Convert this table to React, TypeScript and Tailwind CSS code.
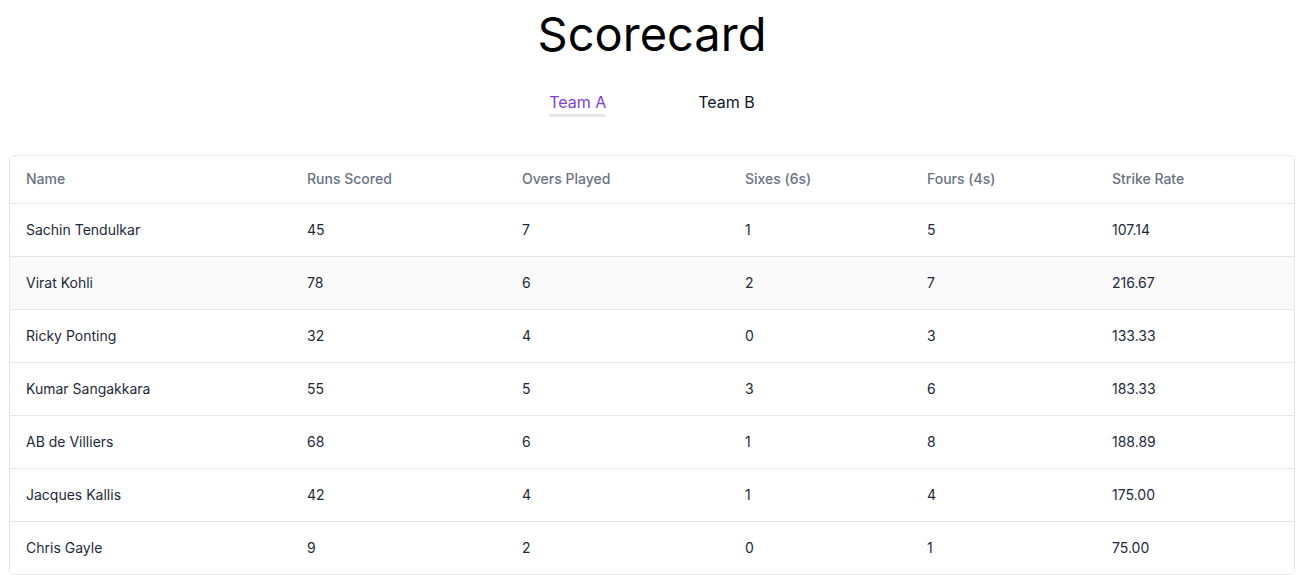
import React, { useState } from "react";

interface Player {
	name: string;
	runs: number;
	overs: number;
	sixes: number;
	fours: number;
	strikeRate: string;
}

const TEAM_A: Player[] = [
	{ name: "Sachin Tendulkar", runs: 45, overs: 7, sixes: 1, fours: 5, strikeRate: "107.14" },
	{ name: "Virat Kohli", runs: 78, overs: 6, sixes: 2, fours: 7, strikeRate: "216.67" },
	{ name: "Ricky Ponting", runs: 32, overs: 4, sixes: 0, fours: 3, strikeRate: "133.33" },
	{ name: "Kumar Sangakkara", runs: 55, overs: 5, sixes: 3, fours: 6, strikeRate: "183.33" },
	{ name: "AB de Villiers", runs: 68, overs: 6, sixes: 1, fours: 8, strikeRate: "188.89" },
	{ name: "Jacques Kallis", runs: 42, overs: 4, sixes: 1, fours: 4, strikeRate: "175.00" },
	{ name: "Chris Gayle", runs: 9, overs: 2, sixes: 0, fours: 1, strikeRate: "75.00" },
];

const TEAM_B: Player[] = TEAM_A;

const COLUMNS = ["Name", "Runs Scored", "Overs Played", "Sixes (6s)", "Fours (4s)", "Strike Rate"];
const WIDTHS = ["w-[281px]", "w-[215px]", "w-[223px]", "w-[182px]", "w-[185px]", ""];

export default function App() {
	const [team, setTeam] = useState<"A" | "B">("A");
	const players = team === "A" ? TEAM_A : TEAM_B;

	return (
		<div className="min-h-screen bg-white text-gray-900 font-['Inter',sans-serif]">
			<h1 className="pt-[6px] text-center text-[47px] leading-[56px] font-normal text-black">Scorecard</h1>
			<div className="mt-[30px] flex justify-center gap-[92px]">
				<button
					onClick={() => setTeam("A")}
					className={`pb-[2px] text-base leading-5 border-b-[3px] ${team === "A" ? "text-[#7e3fd3] border-gray-200" : "text-gray-900 border-transparent"}`}
				>
					Team A
				</button>
				<button
					onClick={() => setTeam("B")}
					className={`pb-[2px] text-base leading-5 border-b-[3px] ${team === "B" ? "text-[#7e3fd3] border-gray-200" : "text-gray-900 border-transparent"}`}
				>
					Team B
				</button>
			</div>
			<div className="mx-[9px] mt-[38px] border border-gray-200 rounded-md overflow-hidden">
				<table className="w-full table-fixed text-sm">
					<thead>
						<tr className="h-[47px] border-b border-gray-200">
							{COLUMNS.map((c, i) => (
								<th key={c} className={`${WIDTHS[i]} px-4 text-left font-medium text-gray-500`}>{c}</th>
							))}
						</tr>
					</thead>
					<tbody>
						{players.map((p, i) => (
							<tr key={p.name} className={`h-[53px] border-b border-gray-200 ${i === 1 ? "bg-[#fafafa]" : "bg-white"}`}>
								<td className="px-4 text-gray-800">{p.name}</td>
								<td className="px-4 text-gray-800">{p.runs}</td>
								<td className="px-4 text-gray-800">{p.overs}</td>
								<td className="px-4 text-gray-800">{p.sixes}</td>
								<td className="px-4 text-gray-800">{p.fours}</td>
								<td className="px-4 text-gray-800">{p.strikeRate}</td>
							</tr>
						))}
					</tbody>
				</table>
			</div>
		</div>
	);
}
